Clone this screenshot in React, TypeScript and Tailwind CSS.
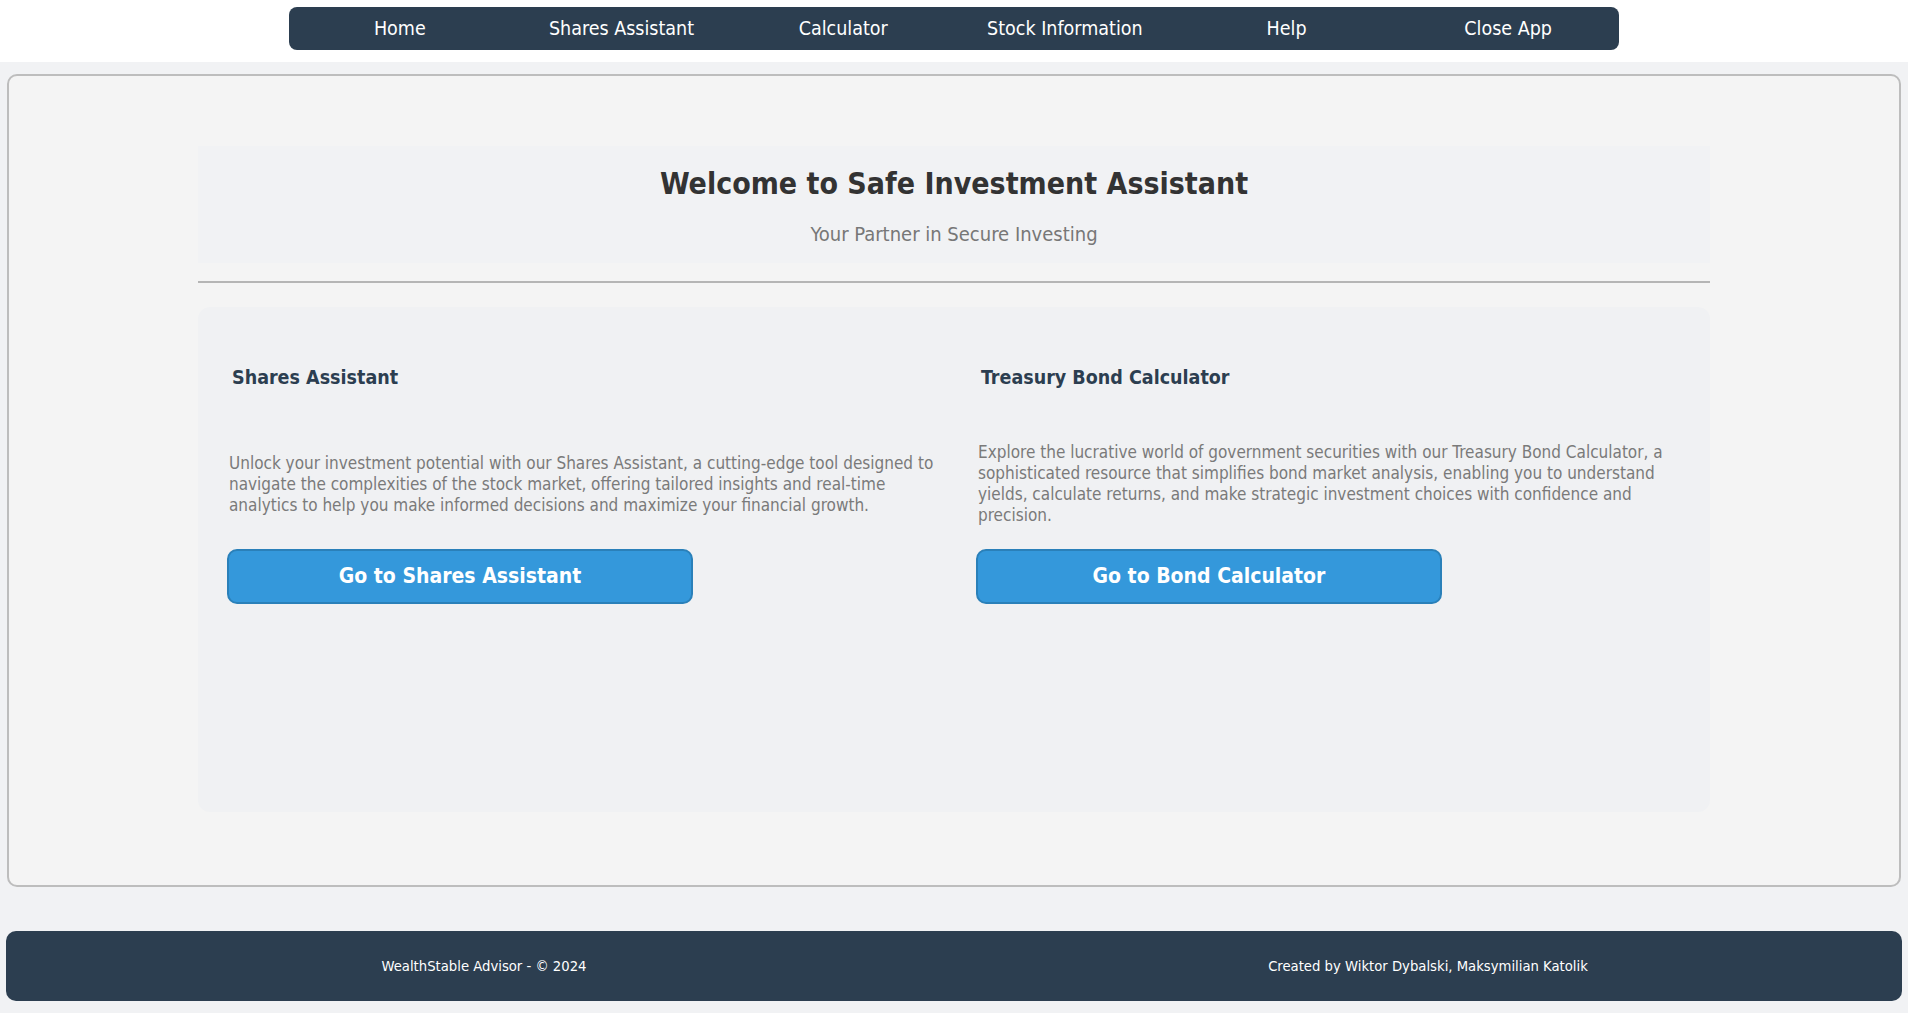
import React from "react";

const navItems = ["Home", "Shares Assistant", "Calculator", "Stock Information", "Help", "Close App"];

const cards = [
  {
    title: "Shares Assistant",
    text: "Unlock your investment potential with our Shares Assistant, a cutting-edge tool designed to navigate the complexities of the stock market, offering tailored insights and real-time analytics to help you make informed decisions and maximize your financial growth.",
    button: "Go to Shares Assistant",
  },
  {
    title: "Treasury Bond Calculator",
    text: "Explore the lucrative world of government securities with our Treasury Bond Calculator, a sophisticated resource that simplifies bond market analysis, enabling you to understand yields, calculate returns, and make strategic investment choices with confidence and precision.",
    button: "Go to Bond Calculator",
  },
];

function App() {
  return (
    <div className="min-h-[1013px] bg-[#f1f2f4] font-['DejaVu_Sans_Condensed','DejaVu_Sans',sans-serif]">
      {/* top menu */}
      <div className="bg-white h-[62px] pt-[7px] flex justify-center">
        <nav className="w-[1330px] h-[43px] bg-[#2c3e50] rounded-[8px] flex">
          {navItems.map((item) => (
            <div key={item} className="flex-1 flex items-center justify-center text-white text-[19.5px]">
              {item}
            </div>
          ))}
        </nav>
      </div>

      <main className="mt-[12px] mx-[7px] h-[813px] border-2 border-[#bdbdbd] rounded-[10px] bg-[#f4f4f4] pt-[70px]">
        <div className="w-[80%] mx-auto">
          <div className="bg-[#f1f2f4] h-[117px] pt-[20px] text-center">
            <h1 className="text-[30px] leading-[36px] font-bold text-[#333333]">Welcome to Safe Investment Assistant</h1>
            <p className="mt-[20px] text-[20px] leading-[24px] text-[#777777]">Your Partner in Secure Investing</p>
          </div>
          <hr className="mt-[18px] border-0 border-t-2 border-[#b5b5b5]" />

          <div className="mt-[24px] h-[505px] bg-[#f0f1f3] rounded-[12px] px-[29px] pt-[59px] grid grid-cols-2 gap-[44px]">
            {cards.map((c) => (
              <div key={c.title} className="flex flex-col items-start">
                <h2 className="ml-[5px] text-[19.5px] leading-[24px] font-bold text-[#2c3e50]">{c.title}</h2>
                <div className="mt-[29px] h-[130px] flex items-center pl-[2px]">
                  <p className="w-[716px] text-[17px] leading-[21px] text-[#7a7a7a]">{c.text}</p>
                </div>
                <button className="w-[466px] h-[55px] bg-[#3498db] border-2 border-[#2a80b9] rounded-[10px] text-white text-[21px] font-bold">
                  {c.button}
                </button>
              </div>
            ))}
          </div>
        </div>
      </main>

      <footer className="mt-[44px] mx-[6px] h-[70px] bg-[#2c3e50] rounded-[10px] grid grid-cols-2 items-center text-white text-[14.7px]">
        <div className="text-center pl-[8px]">WealthStable Advisor - © 2024</div>
        <div className="text-center">Created by Wiktor Dybalski, Maksymilian Katolik</div>
      </footer>
    </div>
  );
}

export default App;
